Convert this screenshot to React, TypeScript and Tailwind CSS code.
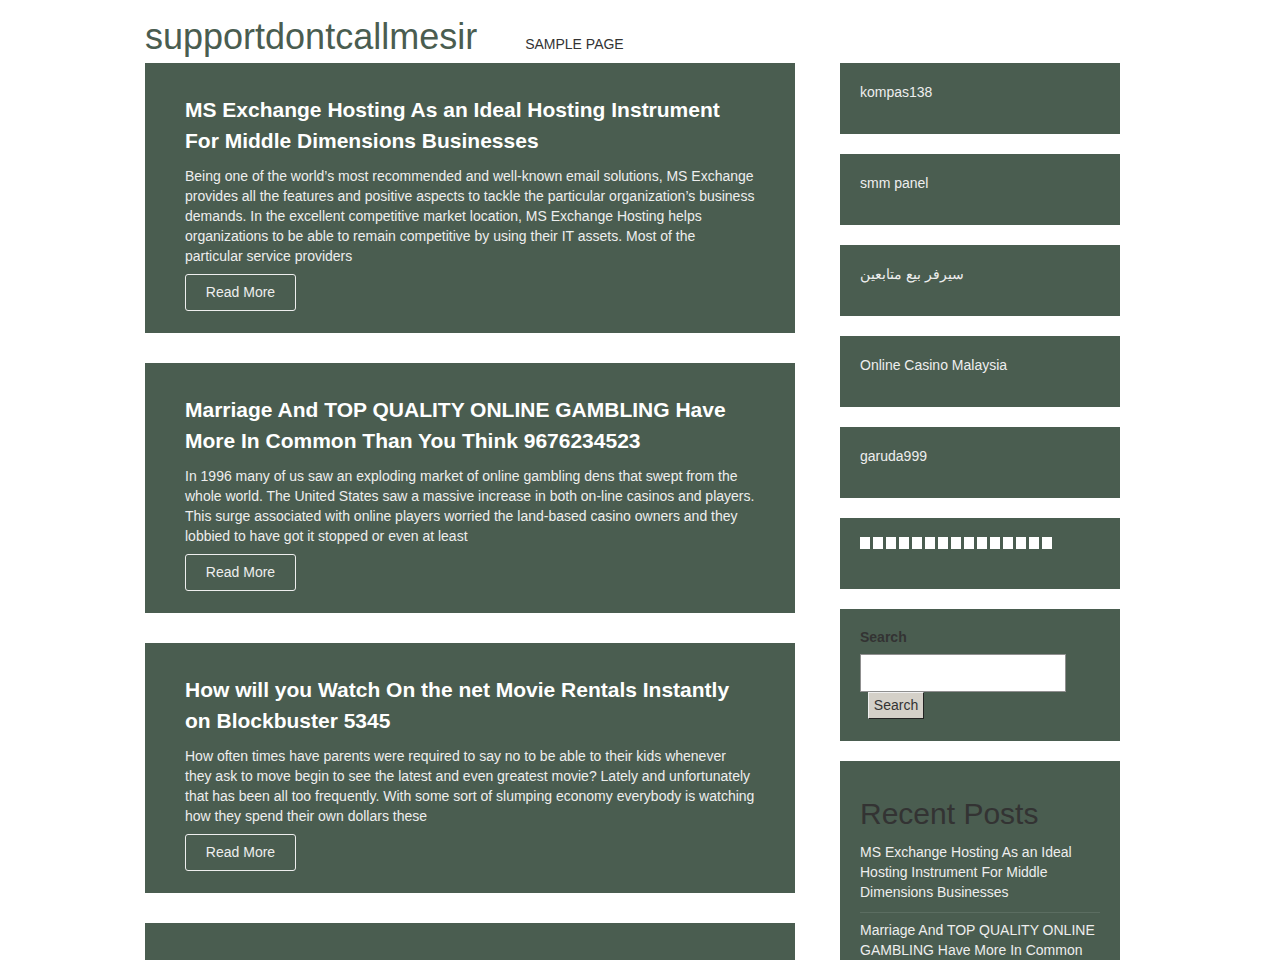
const posts = [
  {
    title: 'MS Exchange Hosting As an Ideal Hosting Instrument For Middle Dimensions Businesses',
    body: 'Being one of the world’s most recommended and well-known email solutions, MS Exchange provides all the features and positive aspects to tackle the particular organization’s business demands. In the excellent competitive market location, MS Exchange Hosting helps organizations to be able to remain competitive by using their IT assets. Most of the particular service providers',
  },
  {
    title: 'Marriage And TOP QUALITY ONLINE GAMBLING Have More In Common Than You Think 9676234523',
    body: 'In 1996 many of us saw an exploding market of online gambling dens that swept from the whole world. The United States saw a massive increase in both on-line casinos and players. This surge associated with online players worried the land-based casino owners and they lobbied to have got it stopped or even at least',
  },
  {
    title: 'How will you Watch On the net Movie Rentals Instantly on Blockbuster 5345',
    body: 'How often times have parents were required to say no to be able to their kids whenever they ask to move begin to see the latest and even greatest movie? Lately and unfortunately that has been all too frequently. With some sort of slumping economy everybody is watching how they spend their own dollars these',
  },
  {
    title: 'Online Casino Malaysia And The Best Ways To Enjoy It',
    body: 'Online gaming keeps growing every year and more players are looking for a trusted place to play.',
  },
];

const links = ['kompas138', 'smm panel', 'سيرفر بيع متابعين', 'Online Casino Malaysia', 'garuda999'];

function PostCard({ title, body }: { title: string; body: string }) {
  return (
    <article className="bg-[#4a5d50] px-[40px] pt-[31px] pb-[22px]">
      <h2 className="text-[21px] leading-[31px] font-bold text-white">{title}</h2>
      <p className="mt-[10px] text-[14px] leading-[20px] text-[#eeeeee]">{body}</p>
      <a className="mt-[8px] inline-flex h-[37px] w-[111px] items-center justify-center rounded-[3px] border border-[#eeeeee] text-[14px] text-[#eeeeee]">
        Read More
      </a>
    </article>
  );
}

function LinkWidget({ children }: { children: React.ReactNode }) {
  return (
    <section className="bg-[#4a5d50] px-[20px] pt-[19px] pb-[32px] text-[14px] leading-[20px] text-[#eeeeee]">
      {children}
    </section>
  );
}

export default function App() {
  return (
    <div className="min-h-screen bg-white font-['Liberation_Sans',Arial,sans-serif]">
      <div className="ml-[145px] w-[975px]">
        <header className="flex items-baseline pt-[16px] pb-[6px]">
          <h1 className="text-[36px] leading-[41px] text-[#4a5d50]">supportdontcallmesir</h1>
          <nav className="ml-[48px] text-[14px] text-[#333333]">SAMPLE PAGE</nav>
        </header>
        <div className="flex gap-[45px]">
          <main className="flex w-[650px] flex-col gap-[30px]">
            {posts.map((p) => (
              <PostCard key={p.title} title={p.title} body={p.body} />
            ))}
          </main>
          <aside className="flex w-[280px] flex-col gap-[20px]">
            {links.map((l) => (
              <LinkWidget key={l}>{l}</LinkWidget>
            ))}
            <LinkWidget>
              <div className="flex h-[20px] items-start gap-[3px]">
                {Array.from({ length: 15 }).map((_, i) => (
                  <span key={i} className="h-[12px] w-[10px] bg-white" />
                ))}
              </div>
            </LinkWidget>
            <section className="bg-[#4a5d50] px-[20px] pt-[18px] pb-[22px]">
              <label className="block text-[14px] leading-[20px] font-bold text-[#333333]">Search</label>
              <input
                type="text"
                className="mt-[7px] block h-[38px] w-[206px] border border-[#8f8f8f] bg-white"
              />
              <button className="ml-[8px] h-[27px] w-[56px] border border-t-[#f0f0f0] border-l-[#f0f0f0] border-r-[#222222] border-b-[#222222] bg-[#d4d0c8] text-[14px] text-[#333333]">
                Search
              </button>
            </section>
            <section className="bg-[#4a5d50] px-[20px] pt-[35px] pb-[20px]">
              <h2 className="text-[30px] leading-[36px] text-[#333333]">Recent Posts</h2>
              <ul className="mt-[3px] text-[14px] leading-[20px] text-[#eeeeee]">
                {posts.slice(0, 3).map((p) => (
                  <li key={p.title} className="border-b border-[#5b6d61] pt-[7px] pb-[10px]">
                    {p.title}
                  </li>
                ))}
              </ul>
            </section>
          </aside>
        </div>
      </div>
    </div>
  );
}
